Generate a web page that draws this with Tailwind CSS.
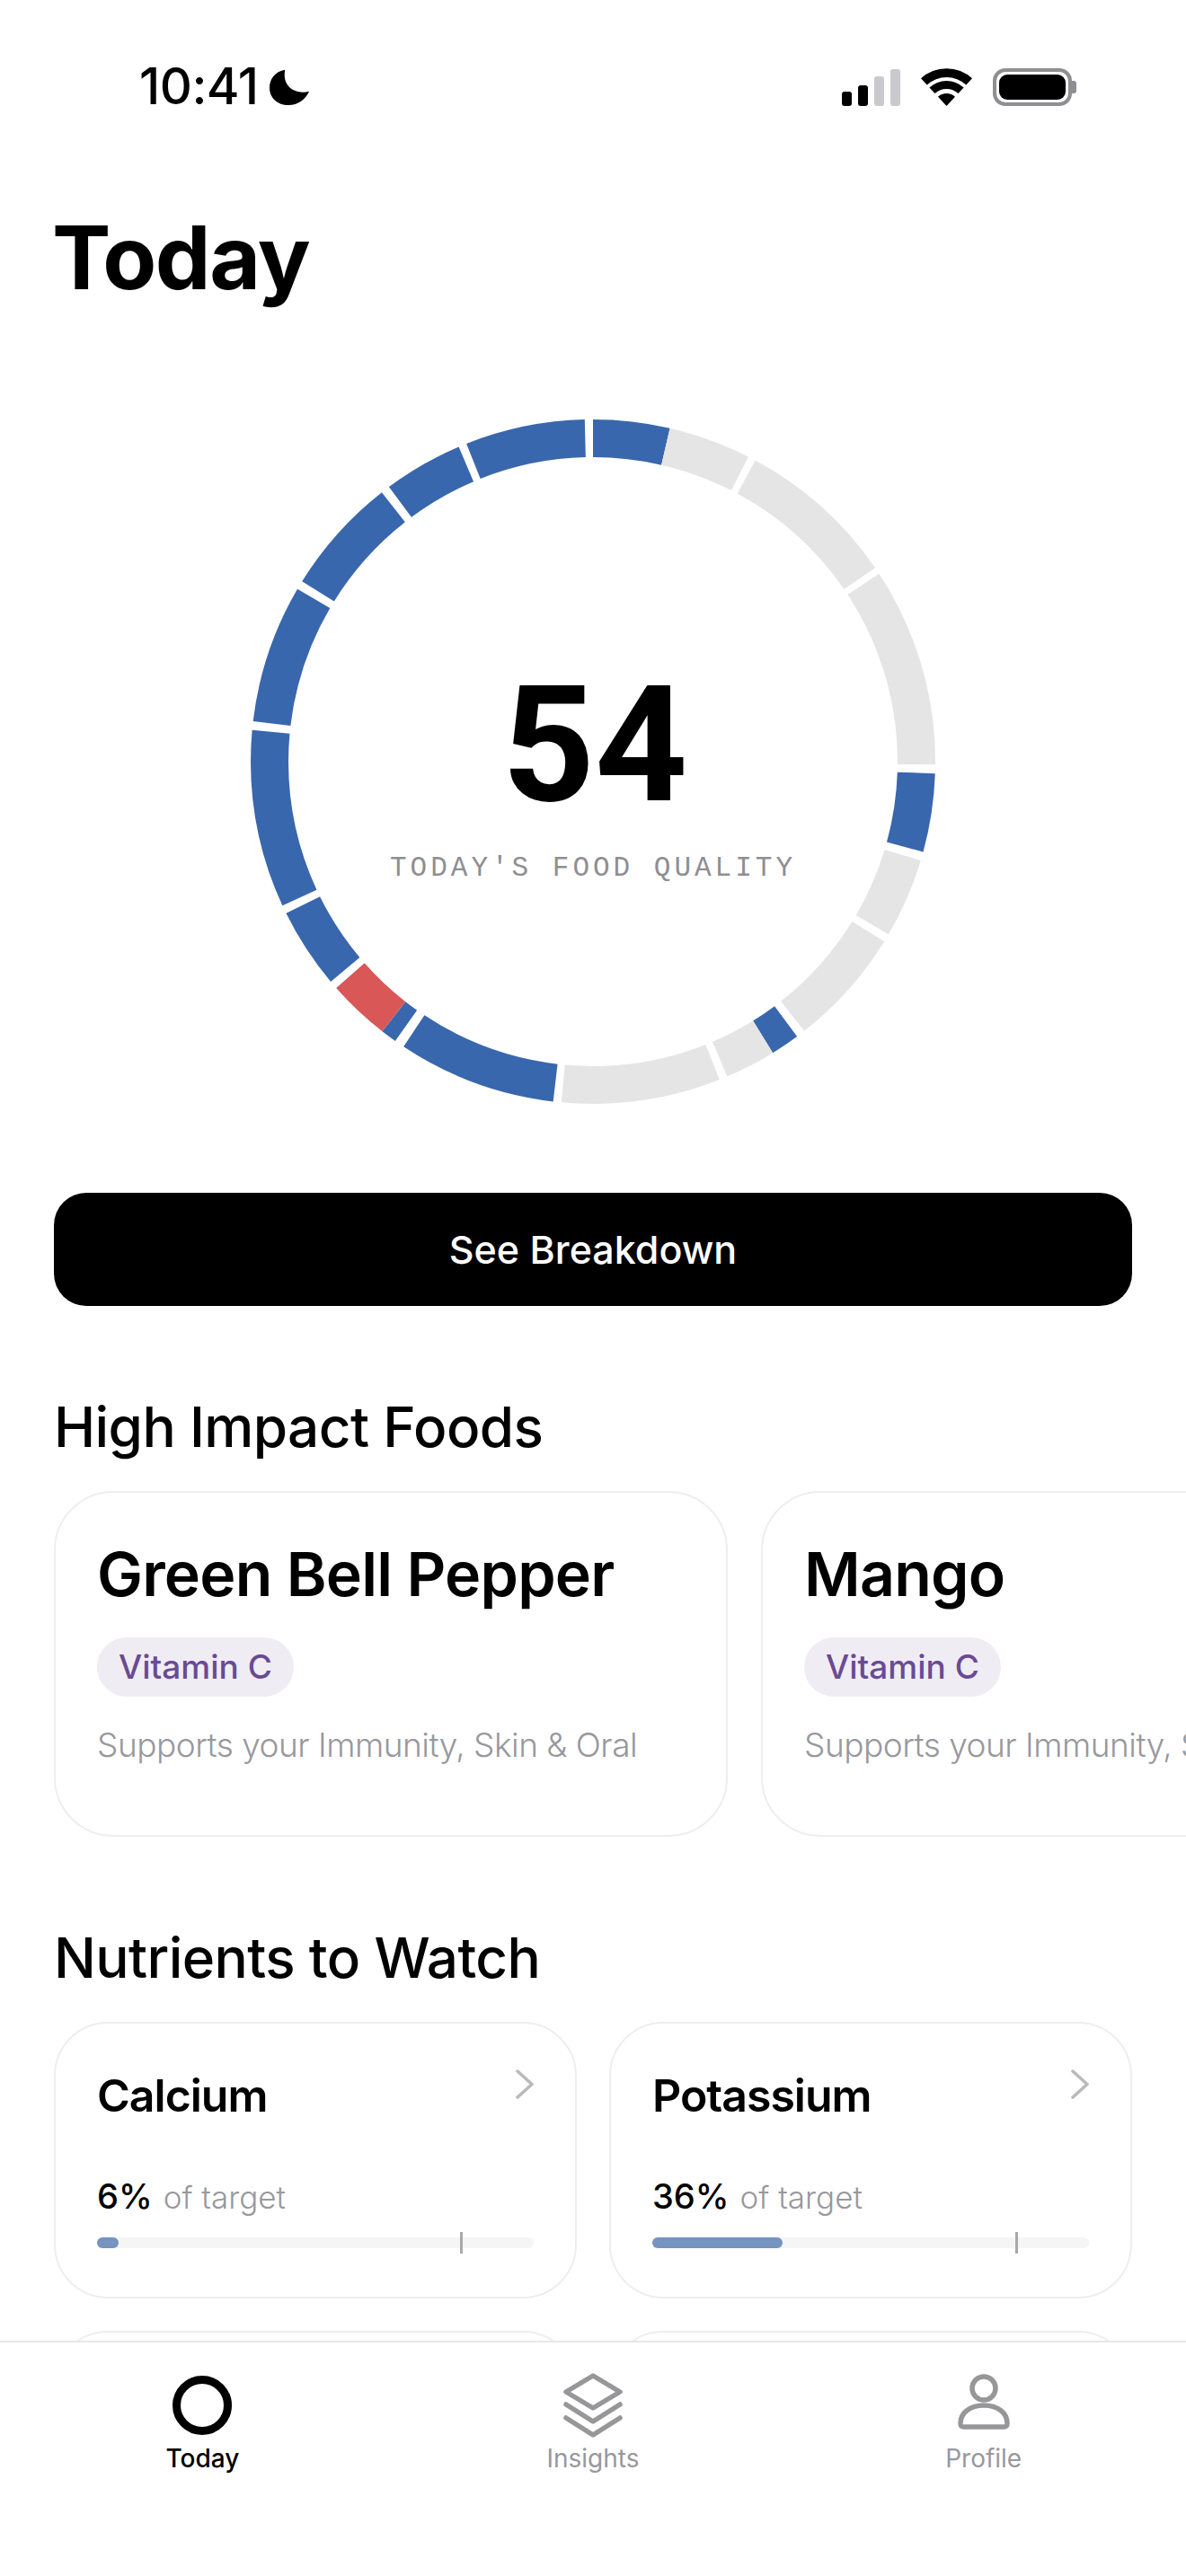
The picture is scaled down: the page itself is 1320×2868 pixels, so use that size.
<!DOCTYPE html>
<html lang="en">
<head>
    <meta charset="UTF-8">
    <meta name="viewport" content="width=device-width, initial-scale=1.0">
    <title>Today</title>
    <script src="https://cdn.jsdelivr.net/npm/@tailwindcss/browser@4"></script>
</head>
<body class="bg-white">

<div class="relative w-[1320px] h-[2868px] overflow-hidden bg-white text-black font-['Inter',sans-serif]">

    <!-- Status bar -->
    <div class="flex justify-between items-start h-[200px] pt-[75px] pl-[155px] pr-[122px]">
        <div class="flex items-center gap-[13px] h-[43px]">
            <span class="text-[56px] leading-[43px] font-medium tracking-[-0.5px]">10:41</span>
            <svg width="45" height="42" viewBox="0 0 47 42"><path d="M18 1C6 3 0 12 0 22C0 33 9 42 22 42C33 42 42 35 46 26C32 30 14 22 18 1Z" fill="#000"/></svg>
        </div>
        <div class="flex items-end gap-[23px] h-[43px]">
            <div class="flex items-end gap-[7px]">
                <div class="w-[11px] h-[16px] rounded-[3px] bg-black"></div>
                <div class="w-[11px] h-[23px] rounded-[3px] bg-black"></div>
                <div class="w-[11px] h-[33px] rounded-[3px] bg-[#c9c9ce]"></div>
                <div class="w-[11px] h-[41px] rounded-[3px] bg-[#c9c9ce]"></div>
            </div>
            <svg width="57" height="42" viewBox="0 0 57 42" fill="#000">
                <path d="M0 11.3A42 42 0 0 1 57 11.3L50.3 18.6A32 32 0 0 0 6.7 18.6Z"/>
                <path d="M9.4 21.5A28 28 0 0 1 47.6 21.5L41.5 28.1A19 19 0 0 0 15.5 28.1Z"/>
                <path d="M19 31.8A14 14 0 0 1 38 31.8L28.5 42Z"/>
            </svg>
            <div class="flex items-center">
                <div class="w-[88px] h-[42px] rounded-[14px] border-[4px] border-[#8e8e93] p-[3px]">
                    <div class="w-full h-full rounded-[9px] bg-black"></div>
                </div>
                <div class="w-[5px] h-[14px] rounded-r-[3px] bg-[#8e8e93]"></div>
            </div>
        </div>
    </div>

    <!-- Title -->
    <h1 class="ml-[58px] text-[98px] leading-[120px] font-bold tracking-[-1.5px] h-[120px] mt-[27px]">Today</h1>

    <!-- Food quality ring -->
    <div class="relative w-[770px] h-[770px] mx-auto mt-[116px]">
        <svg width="770" height="770" viewBox="0 0 770 770" fill="none">
            <g transform="rotate(-90 385 385)" stroke-width="42">
                <circle cx="385" cy="385" r="360" pathLength="360" stroke="#3967ad" stroke-dasharray="13 360" stroke-dashoffset="0"/>
                <circle cx="385" cy="385" r="360" pathLength="360" stroke="#e5e5e5" stroke-dasharray="14 360" stroke-dashoffset="-13"/>
                <circle cx="385" cy="385" r="360" pathLength="360" stroke="#e5e5e5" stroke-dasharray="27.2 360" stroke-dashoffset="-28.3"/>
                <circle cx="385" cy="385" r="360" pathLength="360" stroke="#e5e5e5" stroke-dasharray="33.8 360" stroke-dashoffset="-56.7"/>
                <circle cx="385" cy="385" r="360" pathLength="360" stroke="#3967ad" stroke-dasharray="13.3 360" stroke-dashoffset="-92"/>
                <circle cx="385" cy="385" r="360" pathLength="360" stroke="#e5e5e5" stroke-dasharray="13.5 360" stroke-dashoffset="-106.8"/>
                <circle cx="385" cy="385" r="360" pathLength="360" stroke="#e5e5e5" stroke-dasharray="20.2 360" stroke-dashoffset="-121.7"/>
                <circle cx="385" cy="385" r="360" pathLength="360" stroke="#3967ad" stroke-dasharray="4.9 360" stroke-dashoffset="-143.4"/>
                <circle cx="385" cy="385" r="360" pathLength="360" stroke="#e5e5e5" stroke-dasharray="8.6 360" stroke-dashoffset="-148.3"/>
                <circle cx="385" cy="385" r="360" pathLength="360" stroke="#e5e5e5" stroke-dasharray="27 360" stroke-dashoffset="-158.3"/>
                <circle cx="385" cy="385" r="360" pathLength="360" stroke="#3967ad" stroke-dasharray="26.9 360" stroke-dashoffset="-186.7"/>
                <circle cx="385" cy="385" r="360" pathLength="360" stroke="#3967ad" stroke-dasharray="2.7 360" stroke-dashoffset="-215.3"/>
                <circle cx="385" cy="385" r="360" pathLength="360" stroke="#d95757" stroke-dasharray="10.6 360" stroke-dashoffset="-218"/>
                <circle cx="385" cy="385" r="360" pathLength="360" stroke="#3967ad" stroke-dasharray="13.7 360" stroke-dashoffset="-230"/>
                <circle cx="385" cy="385" r="360" pathLength="360" stroke="#3967ad" stroke-dasharray="30.2 360" stroke-dashoffset="-245.1"/>
                <circle cx="385" cy="385" r="360" pathLength="360" stroke="#3967ad" stroke-dasharray="23.5 360" stroke-dashoffset="-276.8"/>
                <circle cx="385" cy="385" r="360" pathLength="360" stroke="#3967ad" stroke-dasharray="20.1 360" stroke-dashoffset="-301.8"/>
                <circle cx="385" cy="385" r="360" pathLength="360" stroke="#3967ad" stroke-dasharray="13.5 360" stroke-dashoffset="-323.4"/>
                <circle cx="385" cy="385" r="360" pathLength="360" stroke="#3967ad" stroke-dasharray="20.3 360" stroke-dashoffset="-338.3"/>
            </g>
        </svg>
        <div class="absolute inset-0 flex flex-col items-center pt-[279px]">
            <div class="font-['Roboto',sans-serif] text-[180px] leading-[176px] font-bold pl-[4px]">54</div>
            <div class="mt-[31px] font-['Liberation_Mono',monospace] text-[31px] leading-[36px] tracking-[4px] text-[#8e8e93]">TODAY'S FOOD QUALITY</div>
        </div>
    </div>

    <!-- Breakdown button -->
    <div class="px-[60px] mt-[95px]">
        <button class="w-full h-[126px] rounded-[36px] bg-black text-white text-[43px] font-medium">See Breakdown</button>
    </div>

    <!-- High impact foods -->
    <h2 class="ml-[60px] mt-[99px] text-[62px] leading-[72px] font-medium tracking-[-0.6px]">High Impact Foods</h2>
    <div class="flex gap-[37px] pl-[60px] mt-[35px] overflow-hidden">
        <div class="shrink-0 w-[750px] h-[385px] rounded-[66px] border-2 border-[#eeeeef] pl-[46px] pt-[50px]">
            <div class="text-[68px] leading-[80px] font-semibold tracking-[-0.8px]">Green Bell Pepper</div>
            <div class="inline-block mt-[31px] h-[66px] px-[24px] rounded-[33px] bg-[#efedf3] text-[#6a4a94] text-[37px] leading-[66px] font-medium">Vitamin C</div>
            <div class="mt-[31px] text-[37px] leading-[46px] font-light tracking-[-0.5px] text-[#98989d]">Supports your Immunity, Skin &amp; Oral</div>
        </div>
        <div class="shrink-0 w-[750px] h-[385px] rounded-[66px] border-2 border-[#eeeeef] pl-[46px] pt-[50px]">
            <div class="text-[68px] leading-[80px] font-semibold tracking-[-0.8px]">Mango</div>
            <div class="inline-block mt-[31px] h-[66px] px-[24px] rounded-[33px] bg-[#efedf3] text-[#6a4a94] text-[37px] leading-[66px] font-medium">Vitamin C</div>
            <div class="mt-[31px] text-[37px] leading-[46px] font-light tracking-[-0.5px] text-[#98989d]">Supports your Immunity, Skin &amp; Oral</div>
        </div>
    </div>

    <!-- Nutrients to watch -->
    <h2 class="ml-[60px] mt-[99px] text-[62px] leading-[72px] font-medium tracking-[-0.6px]">Nutrients to Watch</h2>
    <div class="grid grid-cols-2 gap-[36px] px-[60px] mt-[35px]">
        <div class="relative h-[308px] rounded-[60px] border-2 border-[#eeeeef] pl-[46px] pt-[50px]">
            <div class="text-[50px] leading-[60px] font-semibold tracking-[-1px]">Calcium</div>
            <svg class="absolute top-[51px] right-[45px]" width="22" height="33" viewBox="0 0 22 33" fill="none"><path d="M3 2L19 16.5L3 31" stroke="#b9b9bd" stroke-width="3.5" stroke-linecap="round" stroke-linejoin="round"/></svg>
            <div class="flex items-baseline gap-[12px] mt-[59px]">
                <span class="text-[38px] leading-[46px] font-medium">6%</span>
                <span class="text-[35px] leading-[46px] font-light text-[#98989d]">of target</span>
            </div>
            <div class="relative w-[486px] h-[12px] mt-[22px] rounded-full bg-[#f5f5f6]">
                <div class="h-full w-[24px] rounded-full bg-[#7594bf]"></div>
                <div class="absolute left-[404px] -top-[6px] w-[3px] h-[24px] bg-[#a9a9ad]"></div>
            </div>
        </div>
        <div class="relative h-[308px] rounded-[60px] border-2 border-[#eeeeef] pl-[46px] pt-[50px]">
            <div class="text-[50px] leading-[60px] font-semibold tracking-[-1px]">Potassium</div>
            <svg class="absolute top-[51px] right-[45px]" width="22" height="33" viewBox="0 0 22 33" fill="none"><path d="M3 2L19 16.5L3 31" stroke="#b9b9bd" stroke-width="3.5" stroke-linecap="round" stroke-linejoin="round"/></svg>
            <div class="flex items-baseline gap-[12px] mt-[59px]">
                <span class="text-[38px] leading-[46px] font-medium">36%</span>
                <span class="text-[35px] leading-[46px] font-light text-[#98989d]">of target</span>
            </div>
            <div class="relative w-[486px] h-[12px] mt-[22px] rounded-full bg-[#f5f5f6]">
                <div class="h-full w-[145px] rounded-full bg-[#7594bf]"></div>
                <div class="absolute left-[404px] -top-[6px] w-[3px] h-[24px] bg-[#a9a9ad]"></div>
            </div>
        </div>
        <div class="h-[308px] rounded-[60px] border-2 border-[#eeeeef]"></div>
        <div class="h-[308px] rounded-[60px] border-2 border-[#eeeeef]"></div>
    </div>

    <!-- Tab bar -->
    <div class="absolute left-0 right-0 top-[2606px] bottom-0 bg-white border-t-2 border-[#e8e8e9] flex px-[8px] pt-[34px]">
        <div class="flex-1 flex flex-col items-center">
            <div class="w-[70px] h-[72px] flex items-center justify-center">
                <div class="w-[66px] h-[66px] rounded-full border-[9px] border-black"></div>
            </div>
            <div class="mt-[6px] text-[28px] leading-[34px] font-medium">Today</div>
        </div>
        <div class="flex-1 flex flex-col items-center">
            <svg width="70" height="76" viewBox="0 0 70 76" fill="none" class="-mt-[2px] -mb-[2px]" stroke="#979799" stroke-width="5.5" stroke-linecap="round" stroke-linejoin="round">
                <path d="M35 5L65 23L35 41L5 23Z"/>
                <path d="M5 37L35 56L65 37"/>
                <path d="M5 52L35 71L65 52"/>
            </svg>
            <div class="mt-[6px] text-[28px] leading-[34px] text-[#98989c]">Insights</div>
        </div>
        <div class="flex-1 flex flex-col items-center">
            <svg width="60" height="72" viewBox="0 0 60 72" fill="none" stroke="#979799" stroke-width="5.5">
                <circle cx="30" cy="17" r="13"/>
                <path d="M4 56C4 44 15 36 30 36C45 36 56 44 56 56C56 59 55 60 52 60H8C5 60 4 59 4 56Z"/>
            </svg>
            <div class="mt-[6px] text-[28px] leading-[34px] text-[#98989c]">Profile</div>
        </div>
    </div>
</div>

</body>
</html>
